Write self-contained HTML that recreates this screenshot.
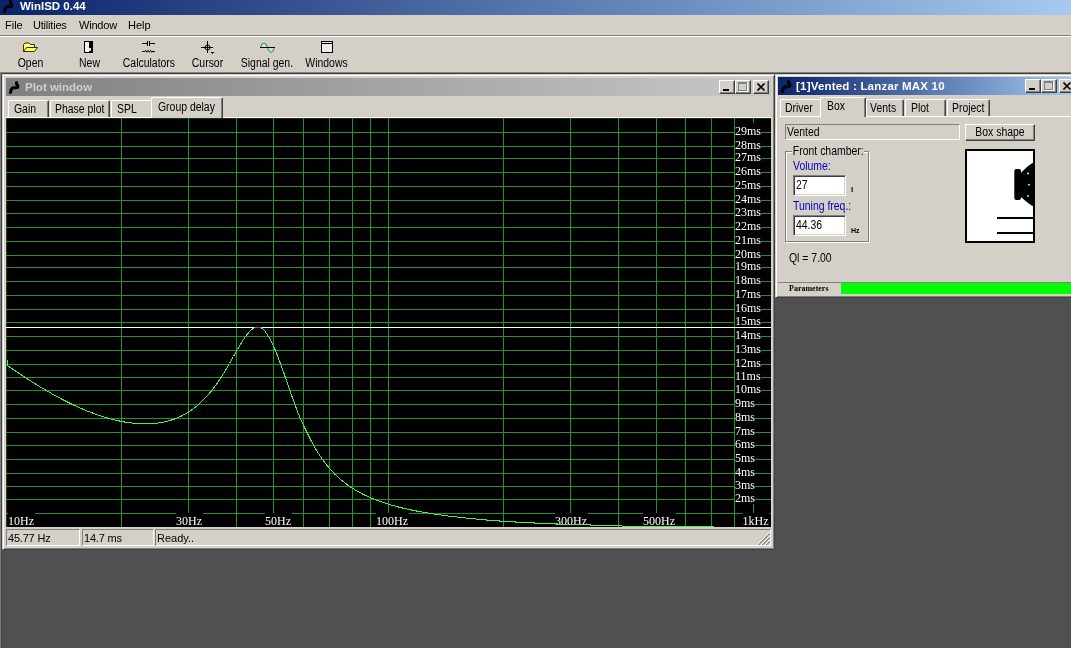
<!DOCTYPE html>
<html><head><meta charset="utf-8"><title>WinISD 0.44</title>
<style>
html,body{margin:0;padding:0}
body{width:1071px;height:648px;overflow:hidden;position:relative;background:#d4d0c8;font-family:"Liberation Sans",sans-serif;font-size:11px;color:#000}
.a{position:absolute}
div,span,svg{position:absolute;box-sizing:border-box;white-space:nowrap}
.ms{font-size:12px;transform:scaleX(0.87);transform-origin:0 0;line-height:14px}
.msc{font-size:12px;transform:scaleX(0.87);transform-origin:50% 0;line-height:14px;text-align:center}
.tb{font-weight:bold;font-size:11px;line-height:14px}
.win{background:#d4d0c8;border:1px solid;border-color:#d4d0c8 #404040 #404040 #d4d0c8;box-shadow:inset 1px 1px #fff,inset -1px -1px #808080}
.btn{background:#d4d0c8;border:1px solid;border-color:#fff #404040 #404040 #fff;box-shadow:inset -1px -1px #808080}
.sunk{border:1px solid;border-color:#808080 #fff #fff #808080}
.tab{background:#d4d0c8;border:1px solid;border-color:#fff #404040 #d4d0c8 #fff;border-bottom:none;box-shadow:inset -1px 0 #808080;border-radius:2px 2px 0 0}
.cap{width:16px;height:14px}
#w{left:0;top:0;width:1071px;height:648px;will-change:transform}
</style></head><body><div id="w">
<!-- main title -->
<div style="left:0;top:0;width:1071px;height:15px;background:linear-gradient(90deg,#0a246a,#a6caf0)"></div>
<svg style="left:2px;top:0" width="14" height="14" viewBox="0 1 14 14"><path d="M8.500 2.500 L8.500 4 L10 6 L9.500 7.500 L4.500 8 L3 10 L2.500 12.500" fill="none" stroke="#000" stroke-width="3" stroke-linejoin="round" stroke-linecap="round"/></svg>
<span class="tb" style="left:20px;top:-1px;color:#fff;font-size:11.5px">WinISD 0.44</span>
<!-- menu -->
<span style="left:5px;top:18px;line-height:14px">File</span>
<span style="left:33px;top:18px;line-height:14px;letter-spacing:-0.2px">Utilities</span>
<span style="left:79px;top:18px;line-height:14px;letter-spacing:-0.2px">Window</span>
<span style="left:128px;top:18px;line-height:14px">Help</span>
<div style="left:0;top:35px;width:1071px;height:1px;background:#808080"></div>
<div style="left:0;top:36px;width:1071px;height:1px;background:#fff"></div>
<!-- toolbar -->
<span class="msc" style="left:1px;top:56px;width:59px">Open</span>
<span class="msc" style="left:60px;top:56px;width:59px">New</span>
<span class="msc" style="left:119px;top:56px;width:59px">Calculators</span>
<span class="msc" style="left:178px;top:56px;width:59px">Cursor</span>
<span class="msc" style="left:237px;top:56px;width:59px">Signal gen.</span>
<span class="msc" style="left:297px;top:56px;width:59px">Windows</span>
<!-- icons -->
<svg style="left:22px;top:41px" width="17" height="13" viewBox="0 0 17 13"><path d="M1.5 10.5 L1.5 3.5 L3 2 L7 2 L8.5 3.5 L12.5 3.5 L12.5 6" fill="#ffff80" stroke="#303000" stroke-width="1"/><path d="M1.5 10.5 L4.5 6.5 L15.5 6.5 L12.5 10.5 Z" fill="#ffff60" stroke="#303000" stroke-width="1"/></svg>
<svg style="left:83px;top:40px" width="12" height="14" viewBox="0 0 12 14" shape-rendering="crispEdges"><rect x="1" y="1" width="9" height="12" fill="#000"/><rect x="2" y="2" width="4" height="10" fill="#f0f0f8"/><rect x="6" y="8" width="2" height="3" fill="#e0e0e8"/></svg>
<svg style="left:141px;top:40px" width="16" height="14" viewBox="0 0 16 14"><g stroke="#000" fill="none" shape-rendering="crispEdges"><path d="M1 3.500H6M9 3.500H14M6.500 1V6M8.500 1V6"/><path d="M1 11.500H4M11 11.500H14"/></g><path d="M4 11.500l0.800-1.200 1.200 2 1.200-2 1.200 2 1.200-2 1.200 2 0.800-0.800" stroke="#000" stroke-width="0.900" fill="none"/></svg>
<svg style="left:200px;top:40px" width="16" height="15" viewBox="0 0 16 15"><g stroke="#000" fill="none"><path d="M7.5 1V13M1 7.5H13" shape-rendering="crispEdges"/><circle cx="7.5" cy="7.500" r="2.500"/></g><path d="M10.500 12h4l-2 2z" fill="#000"/></svg>
<svg style="left:259px;top:41px" width="18" height="14" viewBox="0 0 18 14"><path d="M1.5 6.500 L3 3 L5 2 L7 3 L8.500 6.500 Z" fill="#c0e8d0" stroke="#408050"/><path d="M8.500 6.500 L10 10 L12 11.500 L14 10 L15.500 6.500 Z" fill="#c0e8d0" stroke="#408050"/><path d="M1 6.500H16" stroke="#000"/></svg>
<svg style="left:320px;top:40px" width="15" height="14" viewBox="0 0 15 14" shape-rendering="crispEdges"><rect x="1.500" y="1.500" width="11" height="11" fill="#ececec" stroke="#000"/><rect x="1" y="3" width="12" height="1" fill="#000"/></svg>
<!-- MDI area -->
<div style="left:0;top:72px;width:1071px;height:576px;background:#505050;border-top:1px solid #808080;border-left:1px solid #808080"></div>
<div style="left:1px;top:73px;width:1070px;height:575px;border-top:1px solid #404040;border-left:1px solid #404040"></div>

<!-- plot window -->
<div class="win" style="left:2px;top:74px;width:773px;height:476px"></div>
<div style="left:6px;top:78px;width:765px;height:18px;background:linear-gradient(90deg,#808080,#c8c8c8)"></div>
<svg style="left:8px;top:80px" width="14" height="15" viewBox="0 0 14 15"><path d="M8.500 2.500 L8.500 4 L10 6 L9.500 7.500 L4.500 8 L3 10 L2.500 12.500" fill="none" stroke="#000" stroke-width="3" stroke-linejoin="round" stroke-linecap="round"/></svg>
<span class="tb" style="left:25px;top:80px;color:#d4d0c8;font-size:11.5px">Plot window</span>
<div class="btn cap" style="left:719px;top:80px"></div><div style="left:723px;top:89px;width:6px;height:2px;background:#000"></div>
<div class="btn cap" style="left:735px;top:80px"></div><div style="left:738px;top:82px;width:9px;height:9px;border:1px solid #808080;border-top:2px solid #808080;box-shadow:1px 1px #fff"></div>
<div class="btn cap" style="left:753px;top:80px"></div>
<svg style="left:757px;top:83px" width="9" height="8" viewBox="0 0 9 8"><path d="M0.500 0.500L7.500 7.500M7.500 0.500L0.500 7.500" stroke="#000" stroke-width="1.600"/></svg>
<!-- plot tabs -->
<div style="left:6px;top:117px;width:765px;height:1px;background:#fff"></div>
<div class="tab" style="left:8px;top:100px;width:41px;height:17px"></div><span class="ms" style="left:14px;top:102px">Gain</span>
<div class="tab" style="left:50px;top:100px;width:60px;height:17px"></div><span class="ms" style="left:55px;top:102px">Phase plot</span>
<div class="tab" style="left:111px;top:100px;width:41px;height:17px;border-right:none;box-shadow:none"></div><span class="ms" style="left:117px;top:102px">SPL</span>
<div class="tab" style="left:151px;top:97px;width:72px;height:21px"></div><span class="ms" style="left:158px;top:100px">Group delay</span>
<svg class="plot" width="765" height="409" viewBox="6 118 765 409" style="left:6px;top:118px">
<rect x="6" y="118" width="765" height="409" fill="#000"/>
<g stroke="#249030" stroke-width="1" shape-rendering="crispEdges">
<line x1="6" x2="771" y1="118.5" y2="118.5" stroke="#0c3c10"/>
<line x1="6.5" x2="6.5" y1="118" y2="527" stroke="#104a16"/>
<line x1="6" x2="771" y1="132.5" y2="132.5"/>
<line x1="6" x2="771" y1="146.5" y2="146.5"/>
<line x1="6" x2="771" y1="158.5" y2="158.5"/>
<line x1="6" x2="771" y1="172.5" y2="172.5"/>
<line x1="6" x2="771" y1="186.5" y2="186.5"/>
<line x1="6" x2="771" y1="200.5" y2="200.5"/>
<line x1="6" x2="771" y1="213.5" y2="213.5"/>
<line x1="6" x2="771" y1="227.5" y2="227.5"/>
<line x1="6" x2="771" y1="241.5" y2="241.5"/>
<line x1="6" x2="771" y1="255.5" y2="255.5"/>
<line x1="6" x2="771" y1="267.5" y2="267.5"/>
<line x1="6" x2="771" y1="281.5" y2="281.5"/>
<line x1="6" x2="771" y1="295.5" y2="295.5"/>
<line x1="6" x2="771" y1="309.5" y2="309.5"/>
<line x1="6" x2="771" y1="322.5" y2="322.5"/>
<line x1="6" x2="771" y1="336.5" y2="336.5"/>
<line x1="6" x2="771" y1="350.5" y2="350.5"/>
<line x1="6" x2="771" y1="364.5" y2="364.5"/>
<line x1="6" x2="771" y1="377.5" y2="377.5"/>
<line x1="6" x2="771" y1="390.5" y2="390.5"/>
<line x1="6" x2="771" y1="404.5" y2="404.5"/>
<line x1="6" x2="771" y1="418.5" y2="418.5"/>
<line x1="6" x2="771" y1="432.5" y2="432.5"/>
<line x1="6" x2="771" y1="445.5" y2="445.5"/>
<line x1="6" x2="771" y1="459.5" y2="459.5"/>
<line x1="6" x2="771" y1="473.5" y2="473.5"/>
<line x1="6" x2="771" y1="486.5" y2="486.5"/>
<line x1="6" x2="771" y1="499.5" y2="499.5"/>
<line x1="6" x2="771" y1="513.5" y2="513.5"/>
<line x1="121.5" x2="121.5" y1="118" y2="527"/>
<line x1="188.5" x2="188.5" y1="118" y2="527"/>
<line x1="236.5" x2="236.5" y1="118" y2="527"/>
<line x1="273.5" x2="273.5" y1="118" y2="527"/>
<line x1="303.5" x2="303.5" y1="118" y2="527"/>
<line x1="329.5" x2="329.5" y1="118" y2="527"/>
<line x1="352.5" x2="352.5" y1="118" y2="527"/>
<line x1="370.5" x2="370.5" y1="118" y2="527"/>
<line x1="388.5" x2="388.5" y1="118" y2="527"/>
<line x1="503.5" x2="503.5" y1="118" y2="527"/>
<line x1="570.5" x2="570.5" y1="118" y2="527"/>
<line x1="618.5" x2="618.5" y1="118" y2="527"/>
<line x1="656.5" x2="656.5" y1="118" y2="527"/>
<line x1="685.5" x2="685.5" y1="118" y2="527"/>
<line x1="711.5" x2="711.5" y1="118" y2="527"/>
<line x1="734.5" x2="734.5" y1="118" y2="527"/>
<line x1="753.5" x2="753.5" y1="118" y2="527"/>
</g>
<g font-family="'Liberation Serif', serif" font-size="12" fill="#fff">
<rect x="735" y="490" width="20" height="14" fill="#000"/><text x="735" y="502">2ms</text>
<rect x="735" y="477" width="20" height="14" fill="#000"/><text x="735" y="489">3ms</text>
<rect x="735" y="464" width="20" height="14" fill="#000"/><text x="735" y="476">4ms</text>
<rect x="735" y="450" width="20" height="14" fill="#000"/><text x="735" y="462">5ms</text>
<rect x="735" y="436" width="20" height="14" fill="#000"/><text x="735" y="448">6ms</text>
<rect x="735" y="423" width="20" height="14" fill="#000"/><text x="735" y="435">7ms</text>
<rect x="735" y="409" width="20" height="14" fill="#000"/><text x="735" y="421">8ms</text>
<rect x="735" y="395" width="20" height="14" fill="#000"/><text x="735" y="407">9ms</text>
<rect x="735" y="381" width="26" height="14" fill="#000"/><text x="735" y="393">10ms</text>
<rect x="735" y="368" width="26" height="14" fill="#000"/><text x="735" y="380">11ms</text>
<rect x="735" y="355" width="26" height="14" fill="#000"/><text x="735" y="367">12ms</text>
<rect x="735" y="341" width="26" height="14" fill="#000"/><text x="735" y="353">13ms</text>
<rect x="735" y="327" width="26" height="14" fill="#000"/><text x="735" y="339">14ms</text>
<rect x="735" y="313" width="26" height="14" fill="#000"/><text x="735" y="325">15ms</text>
<rect x="735" y="300" width="26" height="14" fill="#000"/><text x="735" y="312">16ms</text>
<rect x="735" y="286" width="26" height="14" fill="#000"/><text x="735" y="298">17ms</text>
<rect x="735" y="272" width="26" height="14" fill="#000"/><text x="735" y="284">18ms</text>
<rect x="735" y="258" width="26" height="14" fill="#000"/><text x="735" y="270">19ms</text>
<rect x="735" y="246" width="26" height="14" fill="#000"/><text x="735" y="258">20ms</text>
<rect x="735" y="232" width="26" height="14" fill="#000"/><text x="735" y="244">21ms</text>
<rect x="735" y="218" width="26" height="14" fill="#000"/><text x="735" y="230">22ms</text>
<rect x="735" y="204" width="26" height="14" fill="#000"/><text x="735" y="216">23ms</text>
<rect x="735" y="191" width="26" height="14" fill="#000"/><text x="735" y="203">24ms</text>
<rect x="735" y="177" width="26" height="14" fill="#000"/><text x="735" y="189">25ms</text>
<rect x="735" y="163" width="26" height="14" fill="#000"/><text x="735" y="175">26ms</text>
<rect x="735" y="149" width="26" height="14" fill="#000"/><text x="735" y="161">27ms</text>
<rect x="735" y="137" width="26" height="14" fill="#000"/><text x="735" y="149">28ms</text>
<rect x="735" y="123" width="26" height="14" fill="#000"/><text x="735" y="135">29ms</text>
<rect x="8" y="513" width="27" height="14" fill="#000"/><text x="8" y="525">10Hz</text>
<rect x="176" y="513" width="27" height="14" fill="#000"/><text x="176" y="525">30Hz</text>
<rect x="265" y="513" width="27" height="14" fill="#000"/><text x="265" y="525">50Hz</text>
<rect x="376" y="513" width="33" height="14" fill="#000"/><text x="376" y="525">100Hz</text>
<rect x="555" y="513" width="33" height="14" fill="#000"/><text x="555" y="525">300Hz</text>
<rect x="643" y="513" width="33" height="14" fill="#000"/><text x="643" y="525">500Hz</text>
<rect x="742.5" y="513" width="27" height="14" fill="#000"/><text x="742.5" y="525">1kHz</text>
</g>
<line x1="6" x2="771" y1="327.5" y2="327.5" stroke="#fff" stroke-width="1" shape-rendering="crispEdges"/>
<path d="M7.5,359.5 L7.5,365.6 8.5,366.3 9.5,367.0 10.5,367.6 11.5,368.3 12.5,369.0 13.5,369.7 14.5,370.4 15.5,371.0 16.5,371.7 17.5,372.4 18.5,373.0 19.5,373.7 20.5,374.4 21.5,375.0 22.5,375.7 23.5,376.3 24.5,377.0 25.5,377.6 26.5,378.3 27.5,378.9 28.5,379.6 29.5,380.2 30.5,380.9 31.5,381.5 32.5,382.1 33.5,382.7 34.5,383.4 35.5,384.0 36.5,384.6 37.5,385.2 38.5,385.8 39.5,386.5 40.5,387.1 41.5,387.7 42.5,388.3 43.5,388.9 44.5,389.5 45.5,390.0 46.5,390.6 47.5,391.2 48.5,391.8 49.5,392.4 50.5,392.9 51.5,393.5 52.5,394.1 53.5,394.6 54.5,395.2 55.5,395.7 56.5,396.3 57.5,396.8 58.5,397.4 59.5,397.9 60.5,398.4 61.5,399.0 62.5,399.5 63.5,400.0 64.5,400.5 65.5,401.0 66.5,401.5 67.5,402.0 68.5,402.5 69.5,403.0 70.5,403.5 71.5,404.0 72.5,404.5 73.5,405.0 74.5,405.4 75.5,405.9 76.5,406.4 77.5,406.8 78.5,407.3 79.5,407.7 80.5,408.2 81.5,408.6 82.5,409.0 83.5,409.4 84.5,409.9 85.5,410.3 86.5,410.7 87.5,411.1 88.5,411.5 89.5,411.9 90.5,412.3 91.5,412.7 92.5,413.0 93.5,413.4 94.5,413.8 95.5,414.1 96.5,414.5 97.5,414.9 98.5,415.2 99.5,415.5 100.5,415.9 101.5,416.2 102.5,416.5 103.5,416.8 104.5,417.1 105.5,417.4 106.5,417.7 107.5,418.0 108.5,418.3 109.5,418.6 110.5,418.9 111.5,419.1 112.5,419.4 113.5,419.6 114.5,419.9 115.5,420.1 116.5,420.4 117.5,420.6 118.5,420.8 119.5,421.0 120.5,421.2 121.5,421.4 122.5,421.6 123.5,421.8 124.5,422.0 125.5,422.2 126.5,422.3 127.5,422.5 128.5,422.6 129.5,422.8 130.5,422.9 131.5,423.0 132.5,423.1 133.5,423.2 134.5,423.3 135.5,423.4 136.5,423.5 137.5,423.6 138.5,423.6 139.5,423.7 140.5,423.8 141.5,423.8 142.5,423.8 143.5,423.8 144.5,423.9 145.5,423.9 146.5,423.9 147.5,423.8 148.5,423.8 149.5,423.8 150.5,423.7 151.5,423.7 152.5,423.6 153.5,423.5 154.5,423.4 155.5,423.3 156.5,423.2 157.5,423.1 158.5,422.9 159.5,422.8 160.5,422.6 161.5,422.5 162.5,422.3 163.5,422.1 164.5,421.9 165.5,421.6 166.5,421.4 167.5,421.1 168.5,420.9 169.5,420.6 170.5,420.3 171.5,420.0 172.5,419.7 173.5,419.3 174.5,419.0 175.5,418.6 176.5,418.2 177.5,417.8 178.5,417.4 179.5,416.9 180.5,416.4 181.5,416.0 182.5,415.5 183.5,414.9 184.5,414.4 185.5,413.8 186.5,413.3 187.5,412.7 188.5,412.0 189.5,411.4 190.5,410.7 191.5,410.0 192.5,409.3 193.5,408.6 194.5,407.8 195.5,407.1 196.5,406.2 197.5,405.4 198.5,404.5 199.5,403.7 200.5,402.7 201.5,401.8 202.5,400.8 203.5,399.8 204.5,398.8 205.5,397.7 206.5,396.7 207.5,395.5 208.5,394.4 209.5,393.2 210.5,392.0 211.5,390.8 212.5,389.5 213.5,388.2 214.5,386.9 215.5,385.5 216.5,384.1 217.5,382.7 218.5,381.2 219.5,379.7 220.5,378.2 221.5,376.7 222.5,375.1 223.5,373.5 224.5,371.9 225.5,370.3 226.5,368.6 227.5,366.9 228.5,365.2 229.5,363.5 230.5,361.7 231.5,360.0 232.5,358.2 233.5,356.5 234.5,354.7 235.5,352.9 236.5,351.2 237.5,349.5 238.5,347.7 239.5,346.0 240.5,344.4 241.5,342.7 242.5,341.1 243.5,339.6 244.5,338.1 245.5,336.6 246.5,335.3 247.5,334.0 248.5,332.8 249.5,331.6 250.5,330.6 251.5,329.7 252.5,328.9 253.5,328.2 254.5,327.6 255.5,327.5 256.5,327.5 257.5,327.5 258.5,327.5 259.5,327.5 260.5,327.5 261.5,327.9 262.5,328.7 263.5,329.6 264.5,330.7 265.5,331.9 266.5,333.4 267.5,334.9 268.5,336.5 269.5,338.2 270.5,340.0 271.5,341.9 272.5,343.9 273.5,346.1 274.5,348.3 275.5,350.7 276.5,353.2 277.5,355.7 278.5,358.3 279.5,361.0 280.5,363.7 281.5,366.5 282.5,369.3 283.5,372.1 284.5,375.0 285.5,377.9 286.5,380.8 287.5,383.6 288.5,386.5 289.5,389.4 290.5,392.2 291.5,395.1 292.5,397.9 293.5,400.7 294.5,403.4 295.5,406.1 296.5,408.8 297.5,411.4 298.5,414.0 299.5,416.5 300.5,418.9 301.5,421.1 302.5,423.3 303.5,425.4 304.5,427.5 305.5,429.6 306.5,431.6 307.5,433.5 308.5,435.5 309.5,437.5 310.5,439.5 311.5,441.4 312.5,443.2 313.5,445.1 314.5,446.8 315.5,448.6 316.5,450.2 317.5,451.9 318.5,453.5 319.5,455.0 320.5,456.5 321.5,458.0 322.5,459.4 323.5,460.8 324.5,462.1 325.5,463.4 326.5,464.7 327.5,466.0 328.5,467.2 329.5,468.3 330.5,469.5 331.5,470.6 332.5,471.7 333.5,472.7 334.5,473.8 335.5,474.8 336.5,475.7 337.5,476.7 338.5,477.6 339.5,478.5 340.5,479.4 341.5,480.2 342.5,481.0 343.5,481.8 344.5,482.6 345.5,483.4 346.5,484.1 347.5,484.9 348.5,485.6 349.5,486.3 350.5,487.0 351.5,487.6 352.5,488.3 353.5,488.9 354.5,489.5 355.5,490.1 356.5,490.7 357.5,491.3 358.5,491.8 359.5,492.4 360.5,492.9 361.5,493.4 362.5,494.0 363.5,494.5 364.5,495.0 365.5,495.4 366.5,495.9 367.5,496.4 368.5,496.8 369.5,497.3 370.5,497.7 371.5,498.1 372.5,498.5 373.5,498.9 374.5,499.3 375.5,499.7 376.5,500.1 377.5,500.5 378.5,500.8 379.5,501.2 380.5,501.6 381.5,501.9 382.5,502.2 383.5,502.6 384.5,502.9 385.5,503.2 386.5,503.6 387.5,503.9 388.5,504.2 389.5,504.5 390.5,504.8 391.5,505.1 392.5,505.3 393.5,505.6 394.5,505.9 395.5,506.2 396.5,506.4 397.5,506.7 398.5,507.0 399.5,507.2 400.5,507.5 401.5,507.7 402.5,508.0 403.5,508.2 404.5,508.4 405.5,508.7 406.5,508.9 407.5,509.1 408.5,509.3 409.5,509.5 410.5,509.8 411.5,510.0 412.5,510.2 413.5,510.4 414.5,510.6 415.5,510.8 416.5,511.0 417.5,511.2 418.5,511.4 419.5,511.6 420.5,511.7 421.5,511.9 422.5,512.1 423.5,512.3 424.5,512.5 425.5,512.6 426.5,512.8 427.5,513.0 428.5,513.1 429.5,513.3 430.5,513.5 431.5,513.6 432.5,513.8 433.5,513.9 434.5,514.1 435.5,514.2 436.5,514.4 437.5,514.5 438.5,514.7 439.5,514.8 440.5,515.0 441.5,515.1 442.5,515.3 443.5,515.4 444.5,515.5 445.5,515.7 446.5,515.8 447.5,515.9 448.5,516.1 449.5,516.2 450.5,516.3 451.5,516.4 452.5,516.5 453.5,516.7 454.5,516.8 455.5,516.9 456.5,517.0 457.5,517.1 458.5,517.3 459.5,517.4 460.5,517.5 461.5,517.6 462.5,517.7 463.5,517.8 464.5,517.9 465.5,518.0 466.5,518.1 467.5,518.2 468.5,518.3 469.5,518.4 470.5,518.5 471.5,518.6 472.5,518.7 473.5,518.8 474.5,518.9 475.5,519.0 476.5,519.1 477.5,519.2 478.5,519.3 479.5,519.4 480.5,519.5 481.5,519.5 482.5,519.6 483.5,519.7 484.5,519.8 485.5,519.9 486.5,520.0 487.5,520.0 488.5,520.1 489.5,520.2 490.5,520.3 491.5,520.4 492.5,520.4 493.5,520.5 494.5,520.6 495.5,520.7 496.5,520.7 497.5,520.8 498.5,520.9 499.5,521.0 500.5,521.0 501.5,521.1 502.5,521.2 503.5,521.2 504.5,521.3 505.5,521.4 506.5,521.4 507.5,521.5 508.5,521.6 509.5,521.6 510.5,521.7 511.5,521.7 512.5,521.8 513.5,521.9 514.5,521.9 515.5,522.0 516.5,522.0 517.5,522.1 518.5,522.2 519.5,522.2 520.5,522.3 521.5,522.3 522.5,522.4 523.5,522.4 524.5,522.5 525.5,522.5 526.5,522.6 527.5,522.6 528.5,522.7 529.5,522.8 530.5,522.8 531.5,522.9 532.5,522.9 533.5,522.9 534.5,523.0 535.5,523.0 536.5,523.1 537.5,523.1 538.5,523.2 539.5,523.2 540.5,523.3 541.5,523.3 542.5,523.4 543.5,523.4 544.5,523.4 545.5,523.5 546.5,523.5 547.5,523.6 548.5,523.6 549.5,523.7 550.5,523.7 551.5,523.7 552.5,523.8 553.5,523.8 554.5,523.8 555.5,523.9 556.5,523.9 557.5,524.0 558.5,524.0 559.5,524.0 560.5,524.1 561.5,524.1 562.5,524.1 563.5,524.2 564.5,524.2 565.5,524.2 566.5,524.3 567.5,524.3 568.5,524.3 569.5,524.4 570.5,524.4 571.5,524.4 572.5,524.5 573.5,524.5 574.5,524.5 575.5,524.6 576.5,524.6 577.5,524.6 578.5,524.6 579.5,524.7 580.5,524.7 581.5,524.7 582.5,524.8 583.5,524.8 584.5,524.8 585.5,524.8 586.5,524.9 587.5,524.9 588.5,524.9 589.5,524.9 590.5,525.0 591.5,525.0 592.5,525.0 593.5,525.0 594.5,525.1 595.5,525.1 596.5,525.1 597.5,525.1 598.5,525.2 599.5,525.2 600.5,525.2 601.5,525.2 602.5,525.2 603.5,525.3 604.5,525.3 605.5,525.3 606.5,525.3 607.5,525.4 608.5,525.4 609.5,525.4 610.5,525.4 611.5,525.4 612.5,525.5 613.5,525.5 614.5,525.5 615.5,525.5 616.5,525.5 617.5,525.5 618.5,525.5 619.5,525.5 620.5,525.5 621.5,525.5 622.5,526.5 623.5,526.5 624.5,526.5 625.5,526.5 626.5,526.5 627.5,526.5 628.5,526.5 629.5,526.5 630.5,526.5 631.5,526.5 632.5,526.5 633.5,526.5 634.5,526.5 635.5,526.5 636.5,526.5 637.5,526.5 638.5,526.5 639.5,526.5 640.5,526.5 641.5,526.5 642.5,526.5 643.5,526.5 644.5,526.5 645.5,526.5 646.5,526.5 647.5,526.5 648.5,526.5 649.5,526.5 650.5,526.5 651.5,526.5 652.5,526.5 653.5,526.5 654.5,526.5 655.5,526.5 656.5,526.5 657.5,526.5 658.5,526.5 659.5,526.5 660.5,526.5 661.5,526.5 662.5,526.5 663.5,526.5 664.5,526.5 665.5,526.5 666.5,526.5 667.5,526.5 668.5,526.5 669.5,526.5 670.5,526.5 671.5,526.5 672.5,526.5 673.5,526.5 674.5,526.5 675.5,526.5 676.5,526.5 677.5,526.5 678.5,526.5 679.5,526.5 680.5,526.5 681.5,526.5 682.5,526.5 683.5,526.5 684.5,526.5 685.5,526.5 686.5,526.5 687.5,526.5 688.5,526.5 689.5,526.5 690.5,526.5 691.5,526.5 692.5,526.5 693.5,526.5 694.5,526.5 695.5,526.5 696.5,526.5 697.5,526.5 698.5,526.5 699.5,526.5 700.5,526.5 701.5,526.5 702.5,526.5 703.5,526.5 704.5,526.5 705.5,526.5 706.5,526.5 707.5,526.5 708.5,526.5 709.5,526.5 710.5,526.5 711.5,526.5 712.5,526.5 713.5,526.5" fill="none" stroke="#48f048" stroke-width="1" shape-rendering="crispEdges"/>
<rect x="255" y="327" width="6" height="1" fill="#d020d0"/>
</svg>
<!-- status -->
<div class="sunk" style="left:6px;top:529px;width:74px;height:17px"></div><span style="left:8px;top:531px;line-height:14px;letter-spacing:-0.2px">45.77 Hz</span>
<div class="sunk" style="left:82px;top:529px;width:72px;height:17px"></div><span style="left:84px;top:531px;line-height:14px;letter-spacing:-0.2px">14.7 ms</span>
<div class="sunk" style="left:155px;top:529px;width:616px;height:17px"></div><span style="left:157px;top:531px;line-height:14px">Ready..</span>
<svg style="left:757px;top:532px" width="13" height="13" viewBox="0 0 13 13"><g stroke="#808080" stroke-width="1.400"><path d="M1 13L13 1M5 13L13 5M9 13L13 9"/></g><g stroke="#fff" stroke-width="1"><path d="M0 13L13 0M4 13L13 4M8 13L13 8"/></g></svg>

<!-- box window -->
<div class="win" style="left:775px;top:74px;width:310px;height:224px"></div>
<div style="left:778px;top:77px;width:298px;height:18px;background:linear-gradient(90deg,#0a246a,#a6caf0)"></div>
<svg style="left:780px;top:79px" width="14" height="15" viewBox="0 0 14 15"><path d="M8.500 2.500 L8.500 4 L10 6 L9.500 7.500 L4.500 8 L3 10 L2.500 12.500" fill="none" stroke="#000" stroke-width="3" stroke-linejoin="round" stroke-linecap="round"/></svg>
<span class="tb" style="left:796px;top:79px;color:#fff;font-size:11.5px;letter-spacing:0.2px">[1]Vented : Lanzar MAX 10</span>
<div class="btn cap" style="left:1025px;top:79px"></div><div style="left:1029px;top:88px;width:6px;height:2px;background:#000"></div>
<div class="btn cap" style="left:1041px;top:79px"></div><div style="left:1044px;top:81px;width:9px;height:9px;border:1px solid #808080;border-top:2px solid #808080;box-shadow:1px 1px #fff"></div>
<div class="btn cap" style="left:1059px;top:79px"></div>
<svg style="left:1063px;top:82px" width="9" height="8" viewBox="0 0 9 8"><path d="M0.500 0.500L7.500 7.500M7.500 0.500L0.500 7.500" stroke="#000" stroke-width="1.600"/></svg>
<!-- box tabs -->
<div style="left:779px;top:116px;width:297px;height:1px;background:#fff"></div>
<div class="tab" style="left:780px;top:99px;width:41px;height:17px;border-right:none;box-shadow:none"></div><span class="ms" style="left:785px;top:101px">Driver</span>
<div class="tab" style="left:866px;top:99px;width:38px;height:17px"></div><span class="ms" style="left:870px;top:101px">Vents</span>
<div class="tab" style="left:905px;top:99px;width:41px;height:17px"></div><span class="ms" style="left:911px;top:101px">Plot</span>
<div class="tab" style="left:947px;top:99px;width:43px;height:17px"></div><span class="ms" style="left:952px;top:101px">Project</span>
<div class="tab" style="left:820px;top:97px;width:46px;height:20px"></div><span class="ms" style="left:827px;top:99px">Box</span>
<!-- box content -->
<div class="sunk" style="left:785px;top:124px;width:175px;height:16px"></div><span class="ms" style="left:787px;top:125px">Vented</span>
<div class="btn" style="left:965px;top:124px;width:70px;height:17px"></div><span class="msc" style="left:965px;top:125px;width:70px">Box shape</span>
<div style="left:785px;top:151px;width:84px;height:91px;border:1px solid #808080;box-shadow:1px 1px #fff,inset 1px 1px #fff"></div>
<span class="ms" style="left:792px;top:144px;background:#d4d0c8;padding:0 1px">Front chamber:</span>
<span class="ms" style="left:793px;top:159px;color:#0000c0">Volume:</span>
<div style="left:793px;top:175px;width:53px;height:21px;background:#fff;border:1px solid;border-color:#808080 #fff #fff #808080;box-shadow:inset 1px 1px #404040,inset -1px -1px #d4d0c8"></div><span class="ms" style="left:796px;top:178px">27</span>
<span style="left:851px;top:185px;font-size:8px;line-height:9px;font-weight:bold">l</span>
<span class="ms" style="left:793px;top:199px;color:#0000c0">Tuning freq.:</span>
<div style="left:793px;top:215px;width:53px;height:21px;background:#fff;border:1px solid;border-color:#808080 #fff #fff #808080;box-shadow:inset 1px 1px #404040,inset -1px -1px #d4d0c8"></div><span class="ms" style="left:796px;top:218px">44.36</span>
<span style="left:851px;top:227px;font-size:7px;line-height:8px;font-weight:bold">Hz</span>
<span class="ms" style="left:789px;top:251px">Ql = 7.00</span>
<!-- box drawing -->
<div style="left:965px;top:149px;width:70px;height:94px;background:#fff;border:2px solid #000"></div>
<svg style="left:1010px;top:160px" width="24" height="50" viewBox="0 0 24 50"><path d="M10 14 Q17 6 23.500 2.500 L23.500 46.500 Q17 43 10 36 Z" fill="#000"/><rect x="4.300" y="9" width="6.700" height="31" rx="2" fill="#000"/><circle cx="18" cy="13.400" r="0.900" fill="#fff"/><circle cx="18.900" cy="24.700" r="0.900" fill="#fff"/><circle cx="18" cy="35.900" r="0.900" fill="#fff"/></svg>
<div style="left:997px;top:217px;width:36px;height:2px;background:#000"></div>
<div style="left:997px;top:232px;width:36px;height:2px;background:#000"></div>
<!-- parameters bar -->
<div style="left:778px;top:282px;width:300px;height:1px;background:#808080"></div>
<div style="left:841px;top:283px;width:240px;height:11px;background:#00ff00"></div>
<span style="left:789px;top:283px;font-family:'Liberation Serif',serif;font-size:8px;line-height:11px;font-weight:bold">Parameters</span>
</div></body></html>
